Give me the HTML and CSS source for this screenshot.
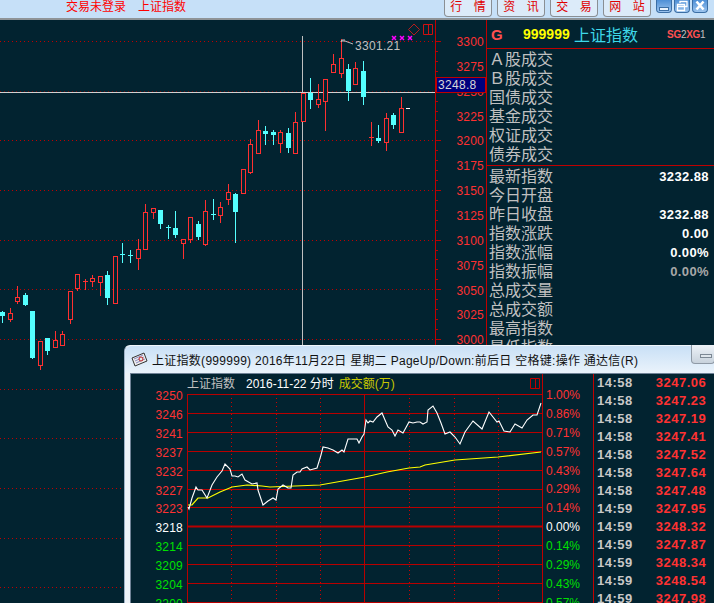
FILE: index.html
```html
<!DOCTYPE html>
<html lang="zh-CN">
<head>
  <meta charset="UTF-8" />
  <title>上证指数</title>
  <link rel="stylesheet" href="styles.css">
</head>
<body>
  <!-- TOP BAR -->
  <div class="topbar">
    <div class="status">交易未登录<span class="status-name">上证指数</span></div>
    <div class="tabs">
      <div class="tab">行 情</div>
      <div class="tab">资 讯</div>
      <div class="tab">交 易</div>
      <div class="tab">网 站</div>
    </div>
    <div class="winbtns">
      <div class="winbtn"><svg width="14" height="12" viewBox="2 0 14 12"><rect x="4.5" y="7.5" width="9" height="3" fill="#e8f2fc" stroke="#3a6ea5"/></svg></div>
      <div class="winbtn"><svg width="14" height="12" viewBox="2 0 14 12"><path d="M7 3V1.5h7v5h-2M4.5 4.5h7v6h-7zM5 6.5h6" fill="none" stroke="#fff" stroke-width="1.3"/></svg></div>
      <div class="winbtn"><svg width="14" height="12" viewBox="2 0 14 12"><path d="M5.5 1.5l7 8M12.5 1.5l-7 8" stroke="#fff" stroke-width="2.6"/></svg></div>
    </div>
  </div>

  <div class="main">
    <!-- K LINE CHART -->
    <div class="kline">
      <svg id="klineSvg" width="435" height="583" viewBox="0 20 435 583"></svg>
      <div class="last-price">3248.8</div>
    </div>

    <!-- AXIS -->
    <div class="axis">
      <svg id="axisSvg" width="51" height="325" viewBox="435 20 51 325"></svg>
    </div>

    <!-- SIDE PANEL -->
    <div class="side">
      <div class="side-head">
        <span class="g">G</span>
        <span class="code">999999</span>
        <span class="name">上证指数</span>
        <span class="sgxg"><b>SG</b>2<b>XG</b>1</span>
      </div>
      <div class="side-group first">
        <div class="row">Ａ股成交</div>
        <div class="row">Ｂ股成交</div>
        <div class="row">国债成交</div>
        <div class="row">基金成交</div>
        <div class="row">权证成交</div>
        <div class="row">债券成交</div>
      </div>
      <div class="side-group">
        <div class="row">最新指数<span class="val">3232.88</span></div>
        <div class="row">今日开盘</div>
        <div class="row">昨日收盘<span class="val">3232.88</span></div>
        <div class="row">指数涨跌<span class="val">0.00</span></div>
        <div class="row">指数涨幅<span class="val">0.00%</span></div>
        <div class="row">指数振幅<span class="val dim">0.00%</span></div>
        <div class="row">总成交量</div>
        <div class="row">总成交额</div>
        <div class="row">最高指数</div>
        <div class="row">最低指数</div>
      </div>
    </div>
  </div>

  <!-- FLOATING MINUTE WINDOW -->
  <div class="popup">
    <div class="popup-title">
      <svg class="popup-icon" width="17" height="15" viewBox="0 0 17 15">
        <path d="M1 6L13 1l3 8L4 14z" fill="#eee" stroke="#333"/>
        <path d="M3 7l9-4M4 9l9-4M5 11l9-4" stroke="#8a8ac0"/>
        <circle cx="10" cy="7" r="2" fill="#e8e8e8" stroke="#c02020"/>
      </svg>
      <span>上证指数(999999) 2016年11月22日 星期二 PageUp/Down:前后日 空格键:操作 通达信(R)</span>
      <div class="popup-btn"><i></i></div>
    </div>
    <div class="popup-body">
      <div class="minute">
        <svg id="minuteSvg" width="411" height="229" viewBox="131 374 411 229"></svg>
        <div class="minute-head"><span class="mh-name">上证指数</span><span class="mh-date">2016-11-22 分时</span><span class="mh-vol">成交额(万)</span></div>
      </div>
      <div class="pct" id="pctCol"></div>
      <div class="ticks" id="tickList"></div>
    </div>
  </div>

  <script src="chart.js"></script>
</body>
</html>
```

FILE: styles.css
```css
* {
  box-sizing: border-box;
}

body {
  margin: 0;
  width: 714px;
  height: 603px;
  overflow: hidden;
  position: relative;
  background-color: #022330;
  font-family: "Liberation Sans", "Noto Sans CJK SC", sans-serif;
}

/* top bar */
.topbar {
  height: 20px;
  display: flex;
  background: #c6e0f8;
  border-bottom: 2px solid #8f9498;
}

.status {
  margin-left: 66px;
  color: #f00;
  font-size: 12px;
  line-height: 14px;
  flex: 1;
}

.status-name {
  margin-left: 12px;
}

.tabs {
  display: flex;
  gap: 5px;
}

.tab {
  width: 48px;
  height: 17px;
  border: 1px solid #8a8f94;
  border-top: 0;
  border-radius: 0 0 4px 4px;
  background: #dcebf9;
  color: #e00000;
  font-size: 12px;
  line-height: 15px;
  text-align: center;
  white-space: pre;
  word-spacing: 8px;
}

.winbtns {
  display: flex;
  margin-left: 5px;
  margin-right: 6px;
  gap: 2px;
}

.winbtn {
  width: 16px;
  height: 13px;
  overflow: hidden;
  border: 1px solid #3a6ea5;
  border-top: 0;
  border-radius: 0 0 4px 4px;
  background: linear-gradient(#4d8fd6, #9cc4ee);
}

.winbtn svg {
  display: block;
}

/* main area */
.main {
  display: flex;
  height: 325px;
}

.kline {
  width: 435px;
  position: relative;
}

.kline svg,
.axis svg {
  display: block;
}

.last-price {
  position: absolute;
  left: 436px;
  top: 57px;
  width: 50px;
  height: 16px;
  background: #00007e;
  border: 1px solid #c00000;
  color: #d8d8d8;
  font-size: 12px;
  line-height: 14px;
  padding-left: 1px;
  letter-spacing: 0.3px;
  z-index: 2;
}

.axis {
  width: 51px;
}

.side {
  flex: 1;
  border-left: 1px solid #c00000;
  overflow: hidden;
}

.side-head {
  height: 29px;
  display: flex;
  align-items: center;
  border-bottom: 1px solid #c00000;
}

.g {
  margin-left: 4px;
  width: 32px;
  color: #ff5050;
  font-size: 15px;
  font-weight: bold;
}

.code {
  width: 51px;
  color: #ff0;
  font-size: 14px;
  font-weight: bold;
}

.name {
  color: #3ed8e8;
  font-size: 16px;
}

.sgxg {
  margin-left: 29px;
  color: #c0c0c0;
  font-size: 10px;
  letter-spacing: -0.3px;
}

.sgxg b {
  color: #ff5050;
}

.side-group {
  border-bottom: 1px solid #c00000;
  padding: 1px 0 0 2px;
}

.side-group.first {
  padding-bottom: 1px;
}

.row {
  height: 19px;
  display: flex;
  justify-content: space-between;
  align-items: center;
  padding-right: 5px;
  color: #c0c0c0;
  font-size: 16px;
  line-height: 19px;
}

.val {
  color: #fff;
  font-size: 13px;
  font-weight: bold;
  letter-spacing: 0.4px;
}

.val.dim {
  color: #a8a8a8;
}

/* popup window */
.popup {
  position: absolute;
  left: 124px;
  top: 345px;
  width: 600px;
  height: 270px;
  padding: 0 0 0 6px;
  background: linear-gradient(90deg, #eef3f8, #a9c9ea);
  border-top: 1px solid #f0f6fc;
  border-left: 1px solid #9fb2c6;
  border-radius: 6px 0 0 0;
}

.popup-title {
  height: 27px;
  display: flex;
  align-items: center;
  color: #111;
  font-size: 12px;
  letter-spacing: 0.28px;
  white-space: nowrap;
  background: linear-gradient(#c9e0f6, #eaf3fb);
  margin-left: -6px;
  padding-left: 6px;
  position: relative;
  border-radius: 6px 0 0 0;
}

.popup-icon {
  margin-right: 4px;
  flex: none;
}

.popup-btn {
  position: absolute;
  left: 566px;
  top: -1px;
  width: 24px;
  height: 19px;
  background: linear-gradient(#eef3f8, #c8d2dc);
  border: 1px solid #8f9aa6;
  border-top: 0;
  border-radius: 0 0 4px 4px;
}

.popup-btn i {
  display: block;
  width: 12px;
  height: 4px;
  margin: 9px 0 0 8px;
  background: #dfe6ec;
  border: 1px solid #7c8894;
}

.popup-body {
  display: flex;
  background: #022330;
  height: 240px;
  border-top: 1px solid #6f8296;
  border-left: 1px solid #6f8296;
  margin-left: -1px;
}

.minute {
  width: 411px;
  position: relative;
  flex: none;
}

.minute svg {
  display: block;
}

.minute-head {
  position: absolute;
  left: 56px;
  top: 3px;
  font-size: 12px;
  line-height: 14px;
  white-space: nowrap;
}

.mh-name {
  color: #c0c0c0;
}

.mh-date {
  color: #fff;
  margin-left: 11px;
}

.mh-vol {
  color: #c8c800;
  margin-left: 5px;
}

.pct {
  width: 52px;
  border-left: 1px solid #c00000;
  border-right: 1px solid #c00000;
  padding: 12px 0 0 3px;
  flex: none;
}

.pct div {
  height: 18.9px;
  font-size: 12px;
  line-height: 19px;
  color: #ff3232;
}

.pct .zero {
  color: #fff;
}

.pct .down {
  color: #00e000;
}

.ticks {
  width: 115px;
  padding-left: 3px;
  flex: none;
}

.tick {
  display: flex;
  font-size: 13px;
  font-weight: bold;
  line-height: 18px;
  height: 18px;
  letter-spacing: 0.5px;
  color: #c8c8c8;
}

.tick b {
  margin-left: 23px;
  color: #ff3232;
}
```

FILE: chart.js
```js
const NS = "http://www.w3.org/2000/svg";
const BG = "#022330";
const RED = "#ff3030";
const CYAN = "#54ffff";

function el(parent, name, attrs, text) {
  const node = document.createElementNS(NS, name);
  for (const k in attrs) node.setAttribute(k, attrs[k]);
  if (text) node.textContent = text;
  parent.appendChild(node);
  return node;
}

// x, high, low, body top, body bottom, type (r/c)
const candles = [
  [2, 311, 323, 312, 316, "c"], [10, 308, 322, 313, 319, "r"], [17, 286, 304, 297, 301, "r"],
  [25, 293, 306, 295, 305, "c"], [32, 311, 359, 311, 358, "c"], [40, 341, 370, 341, 365, "r"],
  [47, 338, 355, 338, 351, "c"], [55, 331, 347, 340, 347, "r"], [62, 331, 345, 334, 345, "r"],
  [70, 291, 324, 291, 319, "r"], [77, 274, 291, 274, 288, "r"], [85, 279, 290, 281, 282, "r"],
  [92, 275, 287, 278, 281, "r"], [100, 276, 296, 276, 282, "r"], [107, 271, 305, 275, 298, "c"],
  [115, 256, 303, 256, 303, "r"], [122, 243, 263, 254, 255, "c"], [130, 250, 263, 255, 256, "c"],
  [138, 239, 270, 249, 258, "r"], [145, 204, 249, 212, 249, "r"], [153, 208, 219, 208, 212, "r"],
  [160, 210, 229, 210, 224, "c"], [168, 225, 239, 227, 228, "c"], [175, 211, 238, 228, 235, "c"],
  [183, 239, 259, 239, 243, "r"], [190, 217, 243, 217, 239, "r"], [198, 221, 240, 224, 237, "c"],
  [205, 200, 246, 211, 244, "r"], [213, 199, 220, 214, 215, "c"], [220, 202, 223, 207, 215, "r"],
  [228, 184, 205, 192, 199, "r"], [235, 193, 243, 194, 212, "c"], [243, 169, 193, 169, 193, "r"],
  [250, 139, 174, 144, 172, "r"], [258, 120, 153, 130, 153, "r"], [265, 126, 145, 131, 134, "c"],
  [273, 130, 145, 132, 135, "c"], [280, 130, 153, 132, 143, "r"], [288, 128, 153, 133, 148, "c"],
  [295, 112, 153, 122, 153, "r"], [303, 93, 121, 93, 121, "r"], [310, 78, 109, 93, 100, "c"],
  [318, 84, 108, 99, 104, "r"], [325, 79, 131, 79, 101, "r"], [333, 54, 73, 64, 72, "r"],
  [341, 39, 78, 58, 73, "r"], [348, 64, 101, 69, 91, "c"], [355, 62, 84, 68, 84, "r"],
  [363, 61, 105, 71, 97, "c"], [371, 122, 146, 137, 138, "r"], [378, 125, 143, 138, 141, "c"],
  [386, 113, 151, 118, 142, "r"], [393, 113, 129, 115, 125, "c"], [401, 97, 132, 108, 132, "r"]
];

const kline = document.getElementById("klineSvg");

for (let i = 0; i < 12; i++) {
  const y = Math.round(41 + i * 49.65) + 0.5;
  el(kline, "line", { x1: 0, x2: 435, y1: y, y2: y, stroke: i === 1 ? "#700808" : "#c00000", "stroke-dasharray": "1 3" });
}

el(kline, "line", { x1: 302.5, x2: 302.5, y1: 36, y2: 345, stroke: "#c0c0c0" });
el(kline, "line", { x1: 0, x2: 435, y1: 92.5, y2: 92.5, stroke: "#d0d0d0" });

candles.forEach(function (c) {
  const color = c[5] === "r" ? RED : CYAN;
  const x = c[0];
  el(kline, "line", { x1: x + 0.5, x2: x + 0.5, y1: c[1], y2: c[3], stroke: color });
  el(kline, "line", { x1: x + 0.5, x2: x + 0.5, y1: c[4], y2: c[2], stroke: color });
  if (c[4] - c[3] < 2) {
    el(kline, "line", { x1: x - 2, x2: x + 3, y1: c[3] + 0.5, y2: c[3] + 0.5, stroke: color });
  } else if (c[5] === "r") {
    el(kline, "rect", { x: x - 1.5, y: c[3] + 0.5, width: 4, height: c[4] - c[3], fill: BG, stroke: color });
  } else {
    el(kline, "rect", { x: x - 2, y: c[3], width: 5, height: c[4] - c[3], fill: color });
  }
});

// top marker and last tick
el(kline, "path", { d: "M345 40h-3l-1 2M341 41h4l8 3", fill: "none", stroke: "#c0c0c0" });
el(kline, "text", { x: 355, y: 50, fill: "#c0c0c0", "font-size": 12, "letter-spacing": 0.3 }, "3301.21");
el(kline, "line", { x1: 406, x2: 410, y1: 108.5, y2: 108.5, stroke: "#fff" });

[394, 402, 410].forEach(function (x) {
  el(kline, "path", { d: "M" + (x - 2) + " 36l4 4M" + (x + 2) + " 36l-4 4", stroke: "#ff00ff", "stroke-width": 1.5 });
});
el(kline, "path", { d: "M414 24l5.5 5.5-5.5 5.5-5.5-5.5z", fill: "none", stroke: "#b81c1c" });
el(kline, "path", { d: "M423.5 24.5h9v10h-9zM428.5 24.5v10", fill: "none", stroke: "#d01010" });

// right axis
const axis = document.getElementById("axisSvg");
el(axis, "line", { x1: 435.5, x2: 435.5, y1: 20, y2: 345, stroke: "#c00000" });
for (let i = 0; i < 31; i++) {
  const y = Math.round(41 + i * 9.93) + 0.5;
  el(axis, "line", { x1: 435, x2: i % 5 === 0 ? 441 : 438, y1: y, y2: y, stroke: "#c00000" });
}
["3300", "3275", "3250", "3225", "3200", "3175", "3150", "3125", "3100", "3075", "3050", "3025", "3000"].forEach(function (t, i) {
  el(axis, "text", { x: 484, y: 46 + i * 24.85, fill: "#ff3030", "font-size": 12, "text-anchor": "end", "letter-spacing": 0.2 }, t);
});

// minute chart
const minute = document.getElementById("minuteSvg");
const GRID = "#b80000";

["3250", "3246", "3241", "3237", "3232", "3227", "3223", "3218", "3214", "3209", "3204", "3200"].forEach(function (t, i) {
  const y = Math.round(394 + i * 18.9) + 0.5;
  el(minute, "line", { x1: 187, x2: 542, y1: y, y2: y, stroke: GRID, "stroke-width": i === 7 ? 2 : 1 });
  const color = i < 7 ? "#ff3232" : i === 7 ? "#fff" : "#00e000";
  el(minute, "text", { x: 183, y: y + 5, fill: color, "font-size": 12, "text-anchor": "end", "letter-spacing": 0.2 }, t);
});

[187, 364].forEach(function (x) {
  el(minute, "line", { x1: x + 0.5, x2: x + 0.5, y1: 394, y2: 603, stroke: GRID });
});
[231, 276, 320, 409, 454, 498].forEach(function (x) {
  el(minute, "line", { x1: x + 0.5, x2: x + 0.5, y1: 394, y2: 603, stroke: "#d00000", "stroke-dasharray": "1 3" });
});
el(minute, "path", { d: "M530.5 378.5h9v10h-9zM535.5 378.5v10", fill: "none", stroke: "#c00000" });

const pricePts = "188,507 189,509 192,498 196,487 198,490 202,490 207,498 212,485 217,477 222,471 225,464 230,469 232,476 235,476 238,477 242,474 245,480 252,484 257,483 258,490 263,505 268,501 273,498 276,500 278,489 283,485 288,488 291,488 293,475 297,472 300,472 302,469 307,467 310,470 317,468 321,455 323,447 328,448 333,450 338,453 342,450 344,452 348,439 353,439 357,439 359,443 362,437 364,434 366,420 368,423 370,421 373,422 377,417 382,413 385,420 388,427 392,430 395,436 398,430 403,433 409,422 413,423 417,422 420,422 423,424 427,422 428,410 433,406 437,413 441,423 445,434 450,432 455,437 460,444 465,432 473,421 482,429 489,412 497,422 499,421 504,431 510,432 515,424 522,428 527,420 533,415 537,415 541,403";
const avgPts = "188,505 192,505 198,498 208,498 220,492 232,487 247,485 262,486 270,487 320,485 365,477 387,472 409,468 420,467 425,465 455,460 498,457 541,452";

el(minute, "polyline", { points: avgPts, fill: "none", stroke: "#ffff00", "stroke-width": 1.2 });
el(minute, "polyline", { points: pricePts, fill: "none", stroke: "#fff", "stroke-width": 1.1 });

// percent column
const pctCol = document.getElementById("pctCol");
["1.00", "0.86", "0.71", "0.57", "0.43", "0.29", "0.14", "0.00", "0.14", "0.29", "0.43", "0.57"].forEach(function (t, i) {
  const row = document.createElement("div");
  row.innerText = t + "%";
  if (i === 7) row.className = "zero";
  if (i > 7) row.className = "down";
  pctCol.appendChild(row);
});

// tick list
const tickList = document.getElementById("tickList");
const ticks = [
  ["14:58", "3247.06"], ["14:58", "3247.23"], ["14:58", "3247.19"], ["14:58", "3247.41"],
  ["14:58", "3247.52"], ["14:58", "3247.64"], ["14:58", "3247.48"], ["14:59", "3247.95"],
  ["14:59", "3248.32"], ["14:59", "3247.87"], ["14:59", "3248.34"], ["14:59", "3248.54"],
  ["14:59", "3247.98"]
];
ticks.forEach(function (t) {
  const row = document.createElement("div");
  row.className = "tick";
  row.innerHTML = t[0] + "<b>" + t[1] + "</b>";
  tickList.appendChild(row);
});
```
